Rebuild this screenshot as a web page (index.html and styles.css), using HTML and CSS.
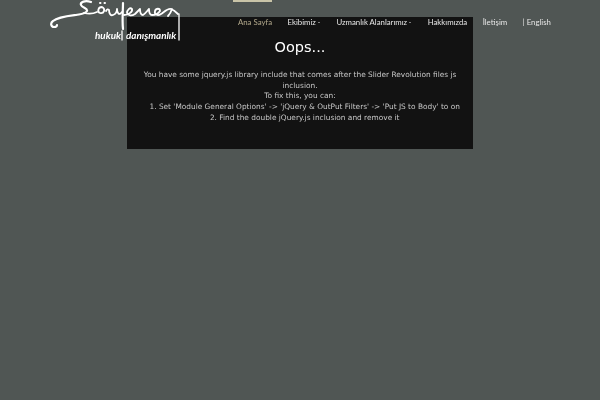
FILE: index.html
```html
<!DOCTYPE html>
<html lang="tr">
<head>
    <meta charset="UTF-8">
    <title>Söylemez Hukuk Danışmanlık</title>
    <link rel="stylesheet" href="styles.css">
</head>
<body>
    <header class="site-header">
        <a class="logo" href="#">
            <svg class="logo-mark" width="132" height="42" viewBox="50 0 132 42" fill="none" stroke="#fff" stroke-width="1.800" stroke-linecap="round" stroke-linejoin="round">
                <path d="M91 2C85 0 80 2 81 5C82 8 88 8 87 11C85 14 81 14 76 15C68 16 58 17 53 21C50 23 51 27 54 27C56 27 57 26 57 25" stroke-width="2.200"/>
                <path d="M84 13C88 14 93 14 97 12"/>
                <path d="M102 7C98 7 97 12 100 13C104 14 106 9 102 7Z"/>
                <path d="M100 3L100.500 3M104.500 3L105 3" stroke-width="2"/>
                <path d="M106 11C107 9 108 9 109 10C109 14 111 16 113 15C116 14 117 11 117 9C117 13 119 16 122 12"/>
                <path d="M123 3C123 10 122 20 123 29" stroke-width="2.200"/>
                <path d="M124 15C128 15 133 12 132 9C130 7 127 10 127 13C128 16 132 16 135 14C137 12 139 10 140 9C140 12 141 15 143 15C145 14 147 11 149 9C149 12 149 15 152 15C155 15 158 14 160 11C160 8 156 8 155 11C154 15 158 16 161 14C164 12 168 8 171 9C174 10 176 12 178 14"/>
                <path d="M172 9C171 12 170 14 168 16"/>
                <path d="M122 31V40" stroke-width="1.300"/>
                <path d="M179 14V40" stroke-width="1.300"/>
            </svg>
            <span class="logo-text"><span>hukuk</span><span>danışmanlık</span></span>
        </a>
        <nav class="main-nav">
            <a class="active" href="#">Ana Sayfa</a>
            <a class="has-menu" href="#">Ekibimiz</a>
            <a class="has-menu" href="#">Uzmanlık Alanlarımız</a>
            <a href="#">Hakkımızda</a>
            <a href="#">İletişim</a>
            <a href="#">| English</a>
        </nav>
    </header>
    <div class="top-tab"></div>
    <main class="slider-error">
        <h1>Oops...</h1>
        <p>You have some jquery.js library include that comes after the Slider Revolution files js inclusion.<br>
        To fix this, you can:<br>
        &nbsp;&nbsp;&nbsp;&nbsp;1. Set 'Module General Options' -&gt; 'jQuery &amp; OutPut Filters' -&gt; 'Put JS to Body' to on<br>
        &nbsp;&nbsp;&nbsp;&nbsp;2. Find the double jQuery.js inclusion and remove it</p>
    </main>
</body>
</html>
```

FILE: styles.css
```css
* {
    margin: 0;
    padding: 0;
    box-sizing: border-box;
}

body {
    height: 400px;
    overflow: hidden;
    background-color: #505654;
    font-family: "DejaVu Sans", sans-serif;
}

.site-header {
    position: absolute;
    top: 0;
    left: 0;
    width: 600px;
    height: 44px;
    z-index: 2;
    will-change: opacity;
}

.logo {
    position: absolute;
    top: 0;
    left: 50px;
    width: 132px;
    height: 42px;
    color: #fff;
    text-decoration: none;
}

.logo-mark {
    display: block;
}

.logo-text {
    position: absolute;
    top: 29px;
    left: 45px;
    display: flex;
    gap: 5px;
    font-family: Lato, sans-serif;
    font-size: 9.9px;
    font-style: italic;
    font-weight: 700;
    white-space: nowrap;
}

.main-nav {
    position: absolute;
    top: 15.5px;
    left: 238px;
    display: flex;
    gap: 15.5px;
    font-family: Lato, sans-serif;
    font-size: 7.8px;
    line-height: 12px;
}

.main-nav a {
    color: #e6e6e6;
    text-decoration: none;
    white-space: nowrap;
}

.main-nav a.active {
    color: #b3a98c;
}

.has-menu::after {
    content: "";
    display: inline-block;
    margin-left: 2px;
    margin-right: 1px;
    vertical-align: 2px;
    border-top: 1.5px solid #e6e6e6;
    border-left: 1.5px solid transparent;
    border-right: 1.5px solid transparent;
}

.top-tab {
    position: absolute;
    top: 0;
    left: 233px;
    width: 39px;
    height: 2px;
    background-color: #c9c4a8;
}

.slider-error {
    width: 346px;
    height: 132px;
    margin: 17px 0 0 127px;
    padding: 20px 8px 0;
    background-color: #121212;
    text-align: center;
}

.slider-error h1 {
    font-size: 14.5px;
    font-weight: 400;
    line-height: 20px;
    color: #fff;
    will-change: opacity;
}

.slider-error p {
    margin-top: 13px;
    font-size: 7.4px;
    line-height: 10.7px;
    color: #c8c8c8;
    will-change: opacity;
}
```
